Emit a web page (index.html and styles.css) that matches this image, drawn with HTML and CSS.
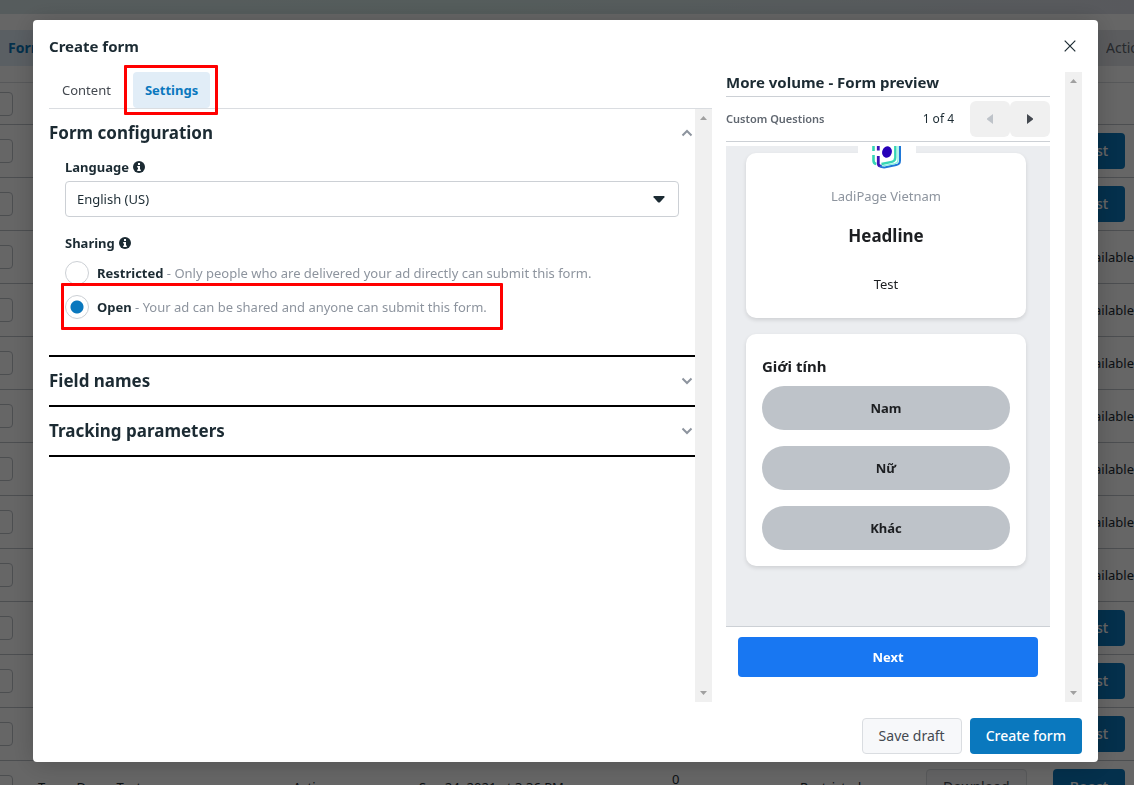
FILE: index.html
```html
<!DOCTYPE html>
<html lang="en">
<head>
  <meta charset="UTF-8" />
  <meta name="viewport" content="width=device-width, initial-scale=1" />
  <title>Create form</title>
  <link rel="stylesheet" href="styles.css">
</head>
<body>
  <!-- Forms library behind the dialog -->
  <div class="page">
    <div class="page-strip"></div>
    <nav class="page-nav">
      <a class="page-tab" href="#">Forms</a>
      <a class="page-actions" href="#">Actions</a>
    </nav>
    <table class="forms-table">
      <colgroup>
        <col class="col-check"><col class="col-name"><col class="col-status"><col class="col-date">
        <col class="col-leads"><col class="col-sharing"><col class="col-download"><col class="col-boost">
      </colgroup>
      <thead>
        <tr><th><input type="checkbox" aria-label="Select all"></th><th colspan="7"></th></tr>
      </thead>
      <tbody id="formRows">
        <tr class="last-row">
          <td><input type="checkbox" aria-label="Select form"></td>
          <td>Trang Demo Test</td>
          <td>Active</td>
          <td>Sep 24, 2021 at 3:36 PM</td>
          <td class="leads">0</td>
          <td>Restricted</td>
          <td><button class="btn btn-light">Download</button></td>
          <td class="end"><button class="btn btn-primary">Boost</button></td>
        </tr>
      </tbody>
    </table>
  </div>

  <div class="overlay">
    <div class="modal" role="dialog" aria-labelledby="modalTitle">
      <header class="modal-header">
        <h1 id="modalTitle">Create form</h1>
        <button class="close-btn" aria-label="Close">
          <svg width="12" height="12" viewBox="0 0 12 12"><path d="M.7 .7 11.3 11.3M11.3 .7 .7 11.3" fill="none" stroke="#1c2b33" stroke-width="1.200"/></svg>
        </button>
      </header>

      <div class="modal-body">
        <section class="editor">
          <div class="tabs">
            <button class="tab">Content</button>
            <button class="tab active marked">Settings</button>
          </div>
          <div class="scroll-area">
            <div class="editor-content">
              <div class="panel open">
                <button class="panel-head">
                  <span>Form configuration</span>
                  <svg class="chevron" width="12" height="8" viewBox="0 0 12 8"><path d="M1.5 6.5 6 2l4.500 4.500"/></svg>
                </button>
                <div class="panel-body">
                  <div class="field">
                    <label class="field-label" for="language">Language
                      <svg width="12" height="12" viewBox="0 0 12 12"><circle cx="6" cy="6" r="6" fill="#1c2b33"/><path d="M5 2h2v2H5zM4.200 5H7v3.500h.8V10H4.200V8.500H5v-2h-.8z" fill="#fff"/></svg>
                    </label>
                    <div class="select-wrap">
                      <select id="language">
                        <option>English (US)</option>
                      </select>
                      <svg class="caret" width="12" height="7" viewBox="0 0 12 7"><path d="M1 0h10q1 .3 .4 1.200L7 6.200q-1 .8-2 0L.6 1.200Q0 .3 1 0z" fill="#1c2b33"/></svg>
                    </div>
                  </div>
                  <fieldset class="field">
                    <legend class="field-label">Sharing
                      <svg width="12" height="12" viewBox="0 0 12 12"><circle cx="6" cy="6" r="6" fill="#1c2b33"/><path d="M5 2h2v2H5zM4.200 5H7v3.500h.8V10H4.200V8.500H5v-2h-.8z" fill="#fff"/></svg>
                    </legend>
                    <div class="radio-group">
                      <label class="radio">
                        <input type="radio" name="sharing">
                        <span><b>Restricted</b> - Only people who are delivered your ad directly can submit this form.</span>
                      </label>
                      <label class="radio marked">
                        <input type="radio" name="sharing" checked>
                        <span><b>Open</b> - Your ad can be shared and anyone can submit this form.</span>
                      </label>
                    </div>
                  </fieldset>
                </div>
              </div>
              <div class="panel">
                <button class="panel-head">
                  <span>Field names</span>
                  <svg class="chevron" width="12" height="8" viewBox="0 0 12 8"><path d="M1.500 1.500 6 6l4.500-4.500"/></svg>
                </button>
              </div>
              <div class="panel">
                <button class="panel-head">
                  <span>Tracking parameters</span>
                  <svg class="chevron" width="12" height="8" viewBox="0 0 12 8"><path d="M1.500 1.500 6 6l4.500-4.500"/></svg>
                </button>
              </div>
            </div>
            <div class="scrollbar" aria-hidden="true">
              <svg width="7" height="4" viewBox="0 0 7 4"><path d="M0 4 3.500 0 7 4z"/></svg>
              <svg width="7" height="4" viewBox="0 0 7 4"><path d="M0 0h7L3.500 4z"/></svg>
            </div>
          </div>
        </section>

        <aside class="preview-pane">
          <div class="preview">
            <h2>More volume - Form preview</h2>
            <div class="pager">
              <span class="step">Custom Questions</span>
              <span class="count">1 of 4</span>
              <div class="pager-btns">
                <button aria-label="Previous" disabled><svg width="6" height="10" viewBox="0 0 6 10"><path d="M6 0v10L0 5.500v-1z" fill="#bec3c9"/></svg></button>
                <button aria-label="Next page"><svg width="6" height="10" viewBox="0 0 6 10"><path d="M0 0v10l6-4.500v-1z" fill="#444950"/></svg></button>
              </div>
            </div>
            <div class="phone">
              <div class="avatar">
                <svg width="36" height="26" viewBox="0 0 36 26" fill="none">
                  <path d="M5.500 0v5M5.500 9v5.500q0 3 2.800 3.500" stroke="#36d6b5" stroke-width="2.600"/>
                  <path d="M10.300 0v4.500M10.300 10v8q.5 2.500 3.500 2" stroke="#3b13b8" stroke-width="2.800"/>
                  <path d="M27.300 0v11.500q0 3.500-3.500 4.300L13.500 18" stroke="#36d6b5" stroke-width="2.400"/>
                  <path d="M32 0v14.500q0 3.800-3.800 4.600L17.500 21.300q-3.500 .5-5.500-1.300" stroke="#1f78d8" stroke-width="2"/>
                  <path d="M30 0v14q0 2.800-3.200 3.600L14 20" stroke="#7ff0dc" stroke-width="1.200"/>
                  <ellipse cx="19" cy="6" rx="4.800" ry="5.800" fill="#2600b8" transform="rotate(18 19 6)"/>
                </svg>
              </div>
              <div class="card intro">
                <p class="brand">LadiPage Vietnam</p>
                <h3>Headline</h3>
                <p>Test</p>
              </div>
              <div class="card question">
                <h4>Giới tính</h4>
                <button class="pill">Nam</button>
                <button class="pill">Nữ</button>
                <button class="pill">Khác</button>
              </div>
            </div>
            <button class="next-btn">Next</button>
          </div>
          <div class="scrollbar" aria-hidden="true">
            <svg width="7" height="4" viewBox="0 0 7 4"><path d="M0 4 3.500 0 7 4z"/></svg>
            <svg width="7" height="4" viewBox="0 0 7 4"><path d="M0 0h7L3.500 4z"/></svg>
          </div>
        </aside>
      </div>

      <footer class="modal-footer">
        <button class="btn btn-light">Save draft</button>
        <button class="btn btn-primary">Create form</button>
      </footer>
    </div>
  </div>

  <script src="script.js"></script>
</body>
</html>
```
FILE: styles.css
```css
* {
  box-sizing: border-box;
}
body {
  margin: 0;
  height: 100vh;
  overflow: hidden;
  font-family: "Noto Sans", "Open Sans", sans-serif;
  font-size: 13px;
  line-height: 20px;
  color: #1c2b33;
  background: #fff;
}
h1, h2, h3, h4, p, fieldset, legend {
  margin: 0;
  padding: 0;
  border: none;
}
button, select {
  font: inherit;
  color: inherit;
  border: none;
  background: none;
  padding: 0;
  cursor: pointer;
}
a {
  text-decoration: none;
}

/* Page behind */
.page-strip {
  height: 14px;
  background: linear-gradient(90deg, #d8e6e8, #d4e8e6 40%, #dcdfe8);
}
.page-nav {
  display: flex;
  justify-content: space-between;
  height: 36px;
  margin: 16px 0;
  line-height: 36px;
  font-size: 14px;
  background: #e4e6eb;
}
.page-tab {
  width: 120px;
  padding-left: 8px;
  font-weight: 700;
  color: #0a78be;
  background: #e1edf7;
}
.page-actions {
  width: 28px;
  overflow: hidden;
  color: #606770;
}
.forms-table {
  width: 100%;
  table-layout: fixed;
  border-collapse: collapse;
  border-top: 1px solid #dadde1;
}
.forms-table tr {
  height: 53px;
  border-bottom: 1px solid #bec3c9;
}
.forms-table thead tr {
  height: 42px;
}
.forms-table th, .forms-table td {
  padding: 0;
  text-align: left;
  white-space: nowrap;
}
.forms-table .leads {
  padding-bottom: 16px;
}
.forms-table .end {
  padding-right: 9px;
  text-align: right;
}
.forms-table .end .btn {
  min-width: 72px;
}
.forms-table .unavailable {
  text-align: right;
}
.forms-table input {
  appearance: none;
  display: block;
  width: 24px;
  height: 24px;
  margin: 0 0 0 -11px;
  border: 1px solid #bec3c9;
  border-radius: 4px;
}
.col-check { width: 38px; }
.col-name { width: 255px; }
.col-status { width: 126px; }
.col-date { width: 253px; }
.col-leads { width: 128px; }
.col-sharing { width: 126px; }
.col-download { width: 100px; }

/* Dialog */
.overlay {
  position: fixed;
  inset: 0;
  display: flex;
  padding: 20px 36px 23px 33px;
  background: rgba(0, 0, 0, 0.6);
}
.modal {
  flex: 1;
  display: flex;
  flex-direction: column;
  min-width: 0;
  background: #fff;
  border-radius: 4px;
  box-shadow: 0 2px 26px rgba(0, 0, 0, 0.2);
}
.modal-header {
  display: flex;
  justify-content: space-between;
  align-items: center;
  height: 52px;
  padding: 0 22px 0 16px;
}
h1 {
  font-size: 15px;
  font-weight: 700;
}
.close-btn svg, .pager svg, .avatar svg {
  display: block;
}
.modal-body {
  flex: 1;
  display: flex;
  gap: 14px;
  min-height: 0;
  padding: 0 16px;
}
.editor {
  flex: 1;
  display: flex;
  flex-direction: column;
  min-width: 0;
}
.tabs {
  display: flex;
  gap: 10px;
  padding-left: 1px;
  border-bottom: 1px solid #dadde1;
}
.tab {
  position: relative;
  height: 36px;
  padding: 0 12px;
  border-radius: 4px;
  color: #444950;
}
.tab.active {
  font-weight: 700;
  color: #0a78be;
  background: #e1edf7;
}
.marked::after {
  content: "";
  position: absolute;
  z-index: 1;
  border: 3px solid #f00;
  border-radius: 1px;
}
.tab.marked::after {
  inset: -7px -8px -7px -9px;
}
.scroll-area {
  flex: 1;
  display: flex;
  min-height: 0;
}
.editor-content {
  flex: 1;
  min-width: 0;
}
.scrollbar {
  display: flex;
  flex-direction: column;
  justify-content: space-between;
  align-items: center;
  width: 17px;
  padding: 7px 0;
  background: #f0f0f0;
}
.scrollbar svg {
  fill: #a0a0a0;
}
.panel {
  border-bottom: 2px solid #000;
}
.panel-head {
  display: flex;
  justify-content: space-between;
  align-items: center;
  width: 100%;
  height: 48px;
  padding-right: 2px;
  font-size: 17px;
  font-weight: 700;
}
.chevron path {
  fill: none;
  stroke: #8d949e;
  stroke-width: 2;
}
.panel-body {
  display: flex;
  flex-direction: column;
  gap: 16px;
  padding: 0 16px 36px;
}
.field-label {
  display: flex;
  align-items: center;
  gap: 4px;
  margin-bottom: 4px;
  font-weight: 700;
}
.select-wrap {
  position: relative;
}
.select-wrap select {
  appearance: none;
  display: block;
  width: 100%;
  height: 36px;
  padding: 0 11px;
  border: 1px solid #ccd0d5;
  border-radius: 4px;
}
.caret {
  position: absolute;
  top: 15px;
  right: 14px;
  pointer-events: none;
}
.radio-group {
  display: flex;
  flex-direction: column;
  gap: 10px;
  padding-top: 4px;
}
.radio {
  position: relative;
  display: flex;
  align-items: center;
  gap: 8px;
  width: fit-content;
  height: 24px;
  color: #8d949e;
}
.radio b {
  font-weight: 700;
  color: #1c2b33;
}
.radio input {
  appearance: none;
  width: 24px;
  height: 24px;
  margin: 0;
  border: 1px solid #ccd0d5;
  border-radius: 50%;
}
.radio input:checked {
  background: radial-gradient(circle, #0a78be 6px, #fff 7px);
}
.radio.marked::after {
  inset: -12px -16px -11px -4px;
}

/* Form preview */
.preview-pane {
  display: flex;
  gap: 15px;
}
.preview {
  width: 324px;
}
h2 {
  padding-bottom: 4px;
  font-size: 15px;
  font-weight: 700;
  border-bottom: 1px solid #ccd0d5;
}
.pager {
  display: flex;
  align-items: center;
  gap: 16px;
  height: 45px;
  font-size: 12px;
  border-bottom: 1px solid #ccd0d5;
}
.step {
  flex: 1;
  font-size: 11px;
  font-weight: 600;
  color: #606770;
}
.pager-btns {
  display: flex;
}
.pager-btns button {
  display: flex;
  justify-content: center;
  align-items: center;
  width: 40px;
  height: 36px;
  border-radius: 6px;
  background: #f0f0f0;
}
.phone {
  position: relative;
  display: flex;
  flex-direction: column;
  gap: 16px;
  height: 481px;
  margin-top: 4px;
  padding: 7px 24px 0 20px;
  overflow: hidden;
  background: #ebedf0;
  border-bottom: 1px solid #ccd0d5;
  color: #1c1e21;
}
.avatar {
  position: absolute;
  top: 0;
  left: 132px;
  width: 58px;
  padding-left: 10px;
  background: #fff;
}
.card {
  border-radius: 10px;
  background: #fff;
  box-shadow: 0 2px 4px rgba(0, 0, 0, 0.12);
}
.intro {
  height: 165px;
  padding-top: 33px;
  text-align: center;
}
.brand {
  color: #8d949e;
}
h3 {
  margin: 20px 0 28px;
  font-size: 17px;
  font-weight: 700;
}
.question {
  display: flex;
  flex-direction: column;
  gap: 16px;
  padding: 22px 16px 16px;
}
h4 {
  margin-bottom: -6px;
  font-size: 15px;
}
.pill {
  height: 44px;
  border-radius: 22px;
  font-weight: 700;
  background: #bec3c9;
}
.next-btn {
  display: block;
  width: 300px;
  height: 40px;
  margin: 10px 12px;
  border-radius: 4px;
  font-weight: 700;
  color: #fff;
  background: #1877f2;
}

.modal-footer {
  display: flex;
  justify-content: flex-end;
  gap: 8px;
  padding: 16px 16px 8px;
}
.btn {
  height: 36px;
  padding: 0 16px;
  border-radius: 4px;
  font-size: 14px;
}
.btn-light {
  border: 1px solid #dadde1;
  color: #444950;
  background: #f7f8fa;
}
.btn-primary {
  font-weight: 500;
  color: #fff;
  background: #0a78be;
}
```
FILE: script.js
```js
const formRows = document.getElementById('formRows');
const lastRow = formRows.querySelector('.last-row');

// true = the form can be boosted
const rows = [true, true, false, false, false, false, false, false, false, true, true, true];

rows.forEach(canBoost => {
  const row = document.createElement('tr');
  row.innerHTML = `
    <td><input type="checkbox" aria-label="Select form"></td>
    <td colspan="6"></td>
    ${canBoost
      ? '<td class="end"><button class="btn btn-primary">Boost</button></td>'
      : '<td class="unavailable">Unavailable</td>'}
  `;
  formRows.insertBefore(row, lastRow);
});
```
